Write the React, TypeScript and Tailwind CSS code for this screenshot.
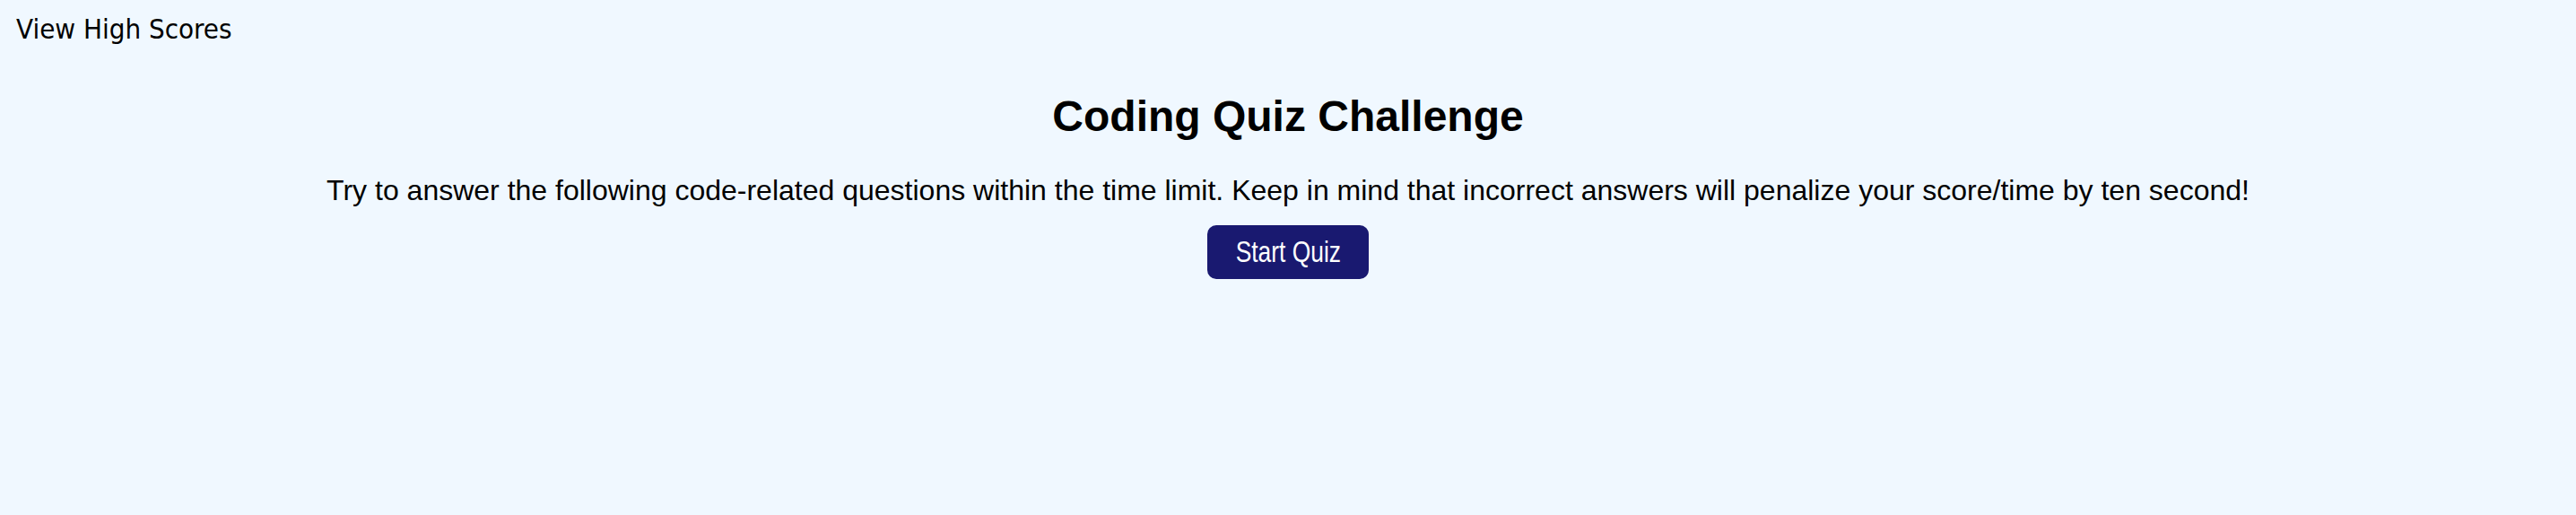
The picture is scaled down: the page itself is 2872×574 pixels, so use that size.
export default function App() {
  return (
    <div className="min-h-screen w-full bg-[#f0f8ff] text-black">
      {/* header link */}
      <header className="px-[18px] pt-[12px]">
        <a
          href="#"
          className="text-[31px] leading-[40px] text-black"
          style={{ fontFamily: '"DejaVu Sans Condensed", "DejaVu Sans", sans-serif' }}
        >
          View High Scores
        </a>
      </header>

      {/* intro */}
      <main
        className="flex flex-col items-center text-center"
        style={{ fontFamily: '"Liberation Sans", Arial, sans-serif' }}
      >
        <h1 className="mt-[50px] text-[48px] leading-[56px] font-bold">Coding Quiz Challenge</h1>
        <p className="mt-[35px] text-[32px] leading-[38px]">
          Try to answer the following code-related questions within the time limit. Keep in mind that
          incorrect answers will penalize your score/time by ten second!
        </p>
        <button
          type="button"
          className="mt-[20px] w-[180px] h-[60px] rounded-[10px] bg-[#191970] text-white text-[33px] flex items-center justify-center"
        >
          <span className="inline-block scale-x-[0.8]">Start Quiz</span>
        </button>
      </main>
    </div>
  );
}
